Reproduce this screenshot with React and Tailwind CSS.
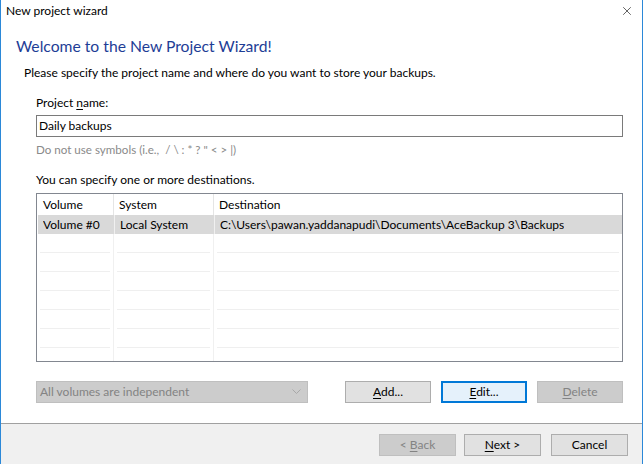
import { X } from 'lucide-react';

const Btn = ({ children, variant = 'normal', w = 'w-[86px]' }) => {
  const styles = {
    normal: 'bg-[#e1e1e1] border border-[#adadad] text-black',
    focus: 'bg-[#e5f1fb] border-2 border-[#0078d7] text-black',
    disabled: 'bg-[#cccccc] border border-[#bfbfbf] text-[#838383]',
  };
  return (
    <div className={`h-[22px] ${w} flex items-center justify-center text-[12px] ${styles[variant]}`}>
      {children}
    </div>
  );
};

const rows = [
  { volume: 'Volume #0', system: 'Local System', dest: 'C:\\Users\\pawan.yaddanapudi\\Documents\\AceBackup 3\\Backups' },
  {}, {}, {}, {}, {}, {}, {},
];

export default function App() {
  return (
    <div className="w-[643px] h-[464px] bg-white border-l border-r border-[#2b88d8] flex flex-col overflow-hidden font-['Segoe_UI','Lato',sans-serif] text-black">
      {/* title bar */}
      <div className="h-[22px] flex items-center justify-between pl-[5px] pr-[8px] text-[12px]">
        <span>New project wizard</span>
        <X size={14} strokeWidth={1.2} className="text-[#222]" />
      </div>

      <div className="flex-1 flex flex-col">
        <div className="mt-[14px] pl-[15px] h-[22px] flex items-center text-[15.7px] text-[#1e3d96]">
          Welcome to the New Project Wizard!
        </div>
        <div className="mt-[7px] pl-[23px] h-[16px] flex items-center text-[12px]">
          Please specify the project name and where do you want to store your backups.
        </div>

        <div className="pl-[35px] pr-[19px]">
          <div className="mt-[14px] h-[16px] flex items-center text-[12px]">
            Project <span className="underline underline-offset-2 ml-[3px]">n</span>ame:
          </div>
          <div className="mt-[4px] h-[22px] border border-[#7a7a7a] flex items-center px-[2px] text-[12px]">
            Daily backups
          </div>
          <div className="mt-[6px] h-[14px] flex items-center text-[11.6px] text-[#8a8a8a]">
            Do not use symbols (i.e.,&nbsp; / \ : * ? " &lt; &gt; |)
          </div>
          <div className="mt-[15px] h-[16px] flex items-center text-[12px]">
            You can specify one or more destinations.
          </div>

          {/* list view */}
          <div className="mt-[5px] h-[169px] border border-[#828790] overflow-hidden text-[12px]">
            <div className="h-[21px] grid grid-cols-[77px_100px_1fr]">
              <div className="pl-[6px] flex items-center border-r border-[#e5e5e5]">Volume</div>
              <div className="pl-[5px] flex items-center border-r border-[#e5e5e5]">System</div>
              <div className="pl-[5px] flex items-center">Destination</div>
            </div>
            <div className="flex flex-col">
              {rows.map((r, i) => (
                <div
                  key={i}
                  className={`h-[19px] grid grid-cols-[77px_100px_1fr] ${i === 0 ? 'bg-[#d9d9d9] ml-[1px]' : ''}`}
                >
                  {['volume', 'system', 'dest'].map((k, j) => (
                    <div key={k} className={`relative flex items-center pl-[5px] ${j < 2 ? 'border-r border-[#f0f0f0]' : ''}`}>
                      <span className="truncate">{r[k] || ''}</span>
                      {i > 0 && <div className="absolute left-[3px] right-[3px] bottom-0 h-px bg-[#efefef]" />}
                    </div>
                  ))}
                </div>
              ))}
            </div>
          </div>

          <div className="mt-[19px] flex items-center">
            <div className="w-[272px] h-[22px] bg-[#cccccc] border border-[#bfbfbf] flex items-center justify-between pl-[3px] pr-[6px] text-[12px] text-[#838383]">
              <span>All volumes are independent</span>
              <svg width="9" height="6" viewBox="0 0 9 6" fill="none">
                <path d="M0.5 0.5 L4.5 4.5 L8.5 0.5" stroke="#a8a8a8" strokeWidth="1" />
              </svg>
            </div>
            <div className="ml-auto flex gap-[10px]">
              <Btn><span><span className="underline underline-offset-2">A</span>dd...</span></Btn>
              <Btn variant="focus"><span><span className="underline underline-offset-2">E</span>dit...</span></Btn>
              <Btn variant="disabled"><span><span className="underline underline-offset-2">D</span>elete</span></Btn>
            </div>
          </div>
        </div>

        <div className="mt-auto h-[41px] border-t border-[#a0a0a0] bg-[#f0f0f0] flex items-start justify-end pt-[10px] pr-[14px]">
          <Btn variant="disabled" w="w-[77px]"><span>&lt; <span className="underline underline-offset-2">B</span>ack</span></Btn>
          <div className="w-[8px]" />
          <Btn w="w-[77px]"><span><span className="underline underline-offset-2">N</span>ext &gt;</span></Btn>
          <div className="w-[10px]" />
          <Btn w="w-[77px]">Cancel</Btn>
        </div>
      </div>
    </div>
  );
}
